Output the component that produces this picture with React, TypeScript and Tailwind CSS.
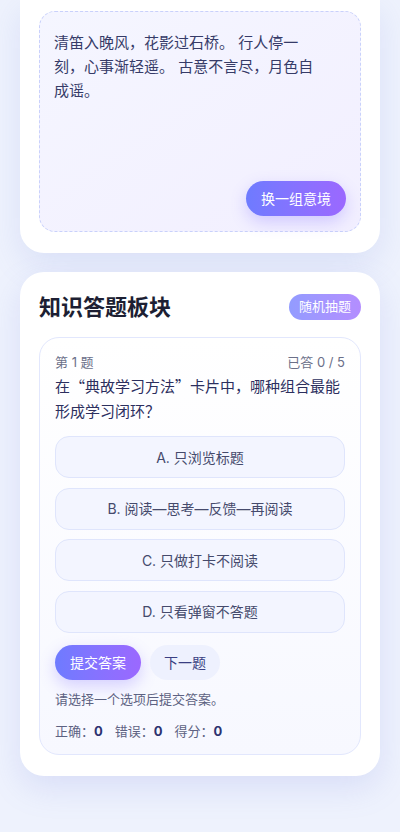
import React from "react";

const options = [
  "A. 只浏览标题",
  "B. 阅读—思考—反馈—再阅读",
  "C. 只做打卡不阅读",
  "D. 只看弹窗不答题",
];

const cjk = { fontFamily: '"Noto Sans CJK SC", sans-serif' };

export default function App() {
  return (
    <div
      className="min-h-[832px] w-[400px] bg-[#eef2fd] px-[20px] pb-[40px]"
      style={{ fontFamily: '"Inter", "Noto Sans CJK SC", "Noto Sans", sans-serif' }}
    >
      {/* Top card (partially scrolled) */}
      <div className="rounded-b-[24px] bg-white px-[19px] pt-[11px] pb-[21px] shadow-[0_12px_32px_rgba(120,135,220,0.16)]">
        <div className="flex h-[221px] flex-col justify-between rounded-[16px] border border-dashed border-[#c9d1fb] bg-gradient-to-br from-[#f5f6ff] to-[#f2efff] pl-[14px] pr-[14px] pt-[19px] pb-[15px]">
          <p className="pr-[24px] text-[15px] leading-[24px] text-[#363b68]">
            清笛入晚风，花影过石桥。 行人停一刻，心事渐轻遥。 古意不言尽，月色自成谣。
          </p>
          <div className="flex justify-end">
            <button className="h-[35px] rounded-full bg-gradient-to-r from-[#6e7bff] to-[#9b68ff] px-[15px] text-[14px] text-white shadow-[0_6px_16px_rgba(130,110,255,0.3)]">
              换一组意境
            </button>
          </div>
        </div>
      </div>

      {/* Quiz card */}
      <div className="mt-[19px] rounded-[24px] bg-white px-[19px] pt-[20px] pb-[21px] shadow-[0_12px_32px_rgba(120,135,220,0.18)]">
        <div className="flex h-[30px] items-center justify-between">
          <h2 className="text-[22px] font-bold leading-[30px] text-[#1d1f33]">知识答题板块</h2>
          <button className="h-[26px] rounded-full bg-gradient-to-r from-[#6e7bff] to-[#9b68ff] px-[10px] text-[13px] text-white opacity-75">
            随机抽题
          </button>
        </div>

        <div className="mt-[15px] rounded-[20px] border border-[#e2e7fd] bg-gradient-to-b from-white to-[#f7f8ff] px-[15px] pt-[14px] pb-[13px]">
          <div className="flex h-[20px] items-center justify-between text-[13px] leading-[20px] text-[#6b7089]">
            <span>第 1 题</span>
            <span>已答 0 / 5</span>
          </div>
          <p className="mt-[1px] text-[15px] leading-[25px] text-[#2c2f5e]" style={cjk}>
            在“典故学习方法”卡片中，哪种组合最能形成学习闭环？
          </p>
          <div className="mt-[13px] flex flex-col gap-[9.5px]">
            {options.map((o) => (
              <button
                key={o}
                className="flex h-[42px] w-full items-center justify-center rounded-[14px] border border-[#dfe5fc] bg-[#f3f5ff] text-[14px] text-[#454a6c]"
              >
                {o}
              </button>
            ))}
          </div>
          <div className="mt-[12px] flex gap-[9px]">
            <button className="h-[35px] rounded-full bg-gradient-to-r from-[#6e7bff] to-[#9b68ff] px-[15px] text-[14px] text-white shadow-[0_6px_16px_rgba(130,110,255,0.3)]">
              提交答案
            </button>
            <button className="h-[35px] rounded-full bg-[#eef1fe] px-[14px] text-[14px] text-[#3a3f82]">
              下一题
            </button>
          </div>
          <p className="mt-[9px] text-[13px] leading-[20px] text-[#5d6282]">请选择一个选项后提交答案。</p>
          <div className="mt-[12px] flex h-[20px] items-center gap-[12px] text-[13px] leading-[20px] text-[#5d6282]">
            <span>
              正确：<b className="font-bold text-[#2d3270]">0</b>
            </span>
            <span>
              错误：<b className="font-bold text-[#2d3270]">0</b>
            </span>
            <span>
              得分：<b className="font-bold text-[#2d3270]">0</b>
            </span>
          </div>
        </div>
      </div>
    </div>
  );
}
